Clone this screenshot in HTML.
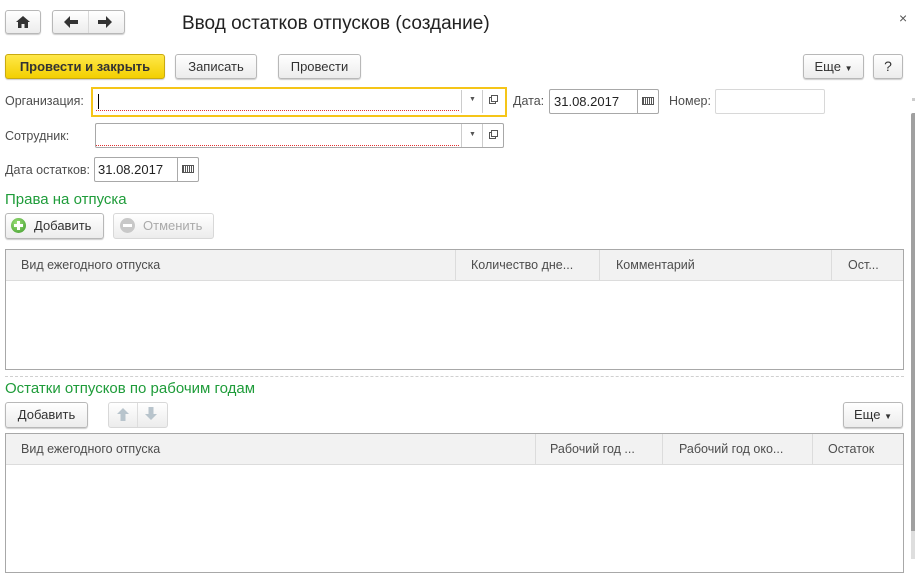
<!DOCTYPE html>
<html><head><meta charset="utf-8"><style>
*{box-sizing:border-box;margin:0;padding:0}
body{width:915px;height:570px;overflow:hidden;background:#fff;font-family:"Liberation Sans",sans-serif;font-size:12px;color:#333;position:relative}
.a{position:absolute}
.btn{position:absolute;border:1px solid #b8b8b8;border-radius:3px;background:linear-gradient(#fff,#ececec);box-shadow:0 1px 1px rgba(0,0,0,.2);text-align:center;color:#333;font-size:13px}
.fld{position:absolute;border:1px solid #a8a8a8;border-radius:2px;background:#fff}
.lbl{position:absolute;font-size:12.5px;color:#4d4d4d}
.green{position:absolute;color:#1f9c3a;font-size:15px}
.th{position:absolute;top:0;height:31px;line-height:31px;font-size:12.5px;color:#4d4d4d;border-right:1px solid #dcdcdc;padding-left:15px;white-space:nowrap}
.red{position:absolute;height:1px;background:repeating-linear-gradient(90deg,#e03030 0 1px,transparent 1px 2px)}
</style></head><body>
<div class="btn" style="left:5px;top:10px;width:36px;height:24px"><svg width="14" height="12" style="margin-top:5px" viewBox="0 0 14 12"><path d="M7 0 L14 6 L12 6 L12 12 L8.5 12 L8.5 8 L5.5 8 L5.5 12 L2 12 L2 6 L0 6Z" fill="#333"/></svg></div>
<div class="btn" style="left:52px;top:10px;width:73px;height:24px"></div>
<div class="a" style="left:88px;top:11px;width:1px;height:22px;background:#d8d8d8"></div>
<svg class="a" style="left:63px;top:15px" width="16" height="14" viewBox="0 0 16 14"><path d="M1 7 L7 1 L7 5 L15 5 L15 9 L7 9 L7 13Z" fill="#333"/></svg>
<svg class="a" style="left:97px;top:15px" width="16" height="14" viewBox="0 0 16 14"><path d="M15 7 L9 1 L9 5 L1 5 L1 9 L9 9 L9 13Z" fill="#333"/></svg>
<div class="a" style="left:182px;top:13px;font-size:19px;color:#222">Ввод остатков отпусков (создание)</div>
<div class="a" style="left:899px;top:10px;font-size:14px;color:#555">×</div>

<div class="btn" style="left:5px;top:54px;width:160px;height:25px;line-height:23px;background:linear-gradient(#ffe84a,#f3cf00);border-color:#c9aa10;font-weight:bold;color:#333">Провести и закрыть</div>
<div class="btn" style="left:175px;top:54px;width:82px;height:25px;line-height:23px">Записать</div>
<div class="btn" style="left:278px;top:54px;width:83px;height:25px;line-height:23px">Провести</div>
<div class="btn" style="left:803px;top:54px;width:61px;height:25px;line-height:23px">Еще <span style="font-size:8px">▼</span></div>
<div class="btn" style="left:873px;top:54px;width:30px;height:25px;line-height:23px;font-size:14px">?</div>

<div class="lbl" style="left:5px;top:94px">Организация:</div>
<div class="a" style="left:91px;top:87px;width:416px;height:30px;border:2px solid #f5c518"></div>
<div class="red" style="left:96px;top:110px;width:364px"></div>
<div class="a" style="left:98px;top:94px;width:1px;height:15px;background:#000"></div>
<div class="a" style="left:461px;top:90px;width:1px;height:23px;background:#ccc"></div>
<div class="a" style="left:482px;top:90px;width:1px;height:23px;background:#ccc"></div>
<div class="a" style="left:469px;top:96px;font-size:7px;color:#555">▼</div>
<div class="a" style="left:489px;top:97px;width:7px;height:7px;border:1px solid #555"></div>
<div class="a" style="left:491px;top:95px;width:7px;height:7px;border:1px solid #555;background:#fff"></div>

<div class="lbl" style="left:513px;top:94px">Дата:</div>
<div class="fld" style="left:549px;top:89px;width:110px;height:25px"></div>
<div class="a" style="left:554px;top:94px;font-size:13px;color:#222">31.08.2017</div>
<div class="a" style="left:637px;top:90px;width:1px;height:23px;background:#aaa"></div>
<div class="a" style="left:642px;top:97px;width:12px;height:8px;border:1px solid #555;background:repeating-linear-gradient(90deg,#555 0 1px,#fff 1px 2px)"></div>
<div class="lbl" style="left:669px;top:94px">Номер:</div>
<div class="fld" style="left:715px;top:89px;width:110px;height:25px;border-color:#d8d8d8"></div>

<div class="lbl" style="left:5px;top:129px">Сотрудник:</div>
<div class="fld" style="left:95px;top:123px;width:409px;height:25px"></div>
<div class="red" style="left:96px;top:145px;width:364px"></div>
<div class="a" style="left:461px;top:124px;width:1px;height:23px;background:#ccc"></div>
<div class="a" style="left:482px;top:124px;width:1px;height:23px;background:#ccc"></div>
<div class="a" style="left:469px;top:131px;font-size:7px;color:#555">▼</div>
<div class="a" style="left:489px;top:132px;width:7px;height:7px;border:1px solid #555"></div>
<div class="a" style="left:491px;top:130px;width:7px;height:7px;border:1px solid #555;background:#fff"></div>

<div class="lbl" style="left:5px;top:163px">Дата остатков:</div>
<div class="fld" style="left:94px;top:157px;width:105px;height:25px"></div>
<div class="a" style="left:98px;top:162px;font-size:13px;color:#222">31.08.2017</div>
<div class="a" style="left:177px;top:158px;width:1px;height:23px;background:#aaa"></div>
<div class="a" style="left:182px;top:165px;width:12px;height:8px;border:1px solid #555;background:repeating-linear-gradient(90deg,#555 0 1px,#fff 1px 2px)"></div>

<div class="green" style="left:5px;top:191px">Права на отпуска</div>
<div class="btn" style="left:5px;top:213px;width:99px;height:26px;line-height:24px;text-align:left;padding-left:28px">Добавить</div>
<div class="a" style="left:11px;top:218px;width:15px;height:15px;border-radius:50%;background:radial-gradient(circle at 40% 35%,#9de07a,#3d9a2a)"><div class="a" style="left:3px;top:6px;width:9px;height:3px;background:#fff"></div><div class="a" style="left:6px;top:3px;width:3px;height:9px;background:#fff"></div></div>
<div class="btn" style="left:113px;top:213px;width:101px;height:26px;line-height:24px;text-align:left;padding-left:29px;color:#aaa;box-shadow:none;border-color:#d8d8d8">Отменить</div>
<div class="a" style="left:120px;top:218px;width:15px;height:15px;border-radius:50%;background:#c8c8c8"><div class="a" style="left:3px;top:6px;width:9px;height:3px;background:#fff"></div></div>

<div class="a" style="left:5px;top:249px;width:899px;height:121px;border:1px solid #a8a8a8">
<div class="a" style="left:0;top:0;width:897px;height:31px;background:#f2f2f2;border-bottom:1px solid #dcdcdc"></div>
<div class="th" style="left:0;width:450px">Вид ежегодного отпуска</div>
<div class="th" style="left:450px;width:144px;padding-left:15px">Количество дне...</div>
<div class="th" style="left:594px;width:232px;padding-left:16px">Комментарий</div>
<div class="th" style="left:826px;width:71px;border:none;padding-left:16px">Ост...</div>
</div>
<div class="a" style="left:5px;top:376px;width:899px;border-top:1px dashed #d0d0d0"></div>

<div class="green" style="left:5px;top:380px">Остатки отпусков по рабочим годам</div>
<div class="btn" style="left:5px;top:402px;width:83px;height:26px;line-height:24px">Добавить</div>
<div class="btn" style="left:108px;top:402px;width:60px;height:26px;box-shadow:none;border-color:#d8d8d8"></div>
<div class="a" style="left:137px;top:403px;width:1px;height:24px;background:#ddd"></div>
<svg class="a" style="left:116px;top:407px" width="14" height="15" viewBox="0 0 14 15"><path d="M7 1 L13 7 L9.5 7 L9.5 14 L4.5 14 L4.5 7 L1 7Z" fill="#b8c4cc"/></svg>
<svg class="a" style="left:144px;top:406px" width="14" height="15" viewBox="0 0 14 15"><path d="M7 14 L13 8 L9.5 8 L9.5 1 L4.5 1 L4.5 8 L1 8Z" fill="#b8c4cc"/></svg>
<div class="btn" style="left:843px;top:402px;width:60px;height:26px;line-height:24px">Еще <span style="font-size:8px">▼</span></div>

<div class="a" style="left:5px;top:433px;width:899px;height:140px;border:1px solid #a8a8a8">
<div class="a" style="left:0;top:0;width:897px;height:31px;background:#f2f2f2;border-bottom:1px solid #dcdcdc"></div>
<div class="th" style="left:0;width:530px">Вид ежегодного отпуска</div>
<div class="th" style="left:530px;width:127px;padding-left:14px">Рабочий год ...</div>
<div class="th" style="left:657px;width:150px;padding-left:16px">Рабочий год око...</div>
<div class="th" style="left:807px;width:90px;border:none;padding-left:15px">Остаток</div>
</div>

<div class="a" style="left:912px;top:98px;width:3px;height:3px;background:#ccc"></div>
<div class="a" style="left:911px;top:113px;width:4px;height:418px;background:#a0a0a0;border-radius:2px 0 0 0"></div>
<div class="a" style="left:911px;top:531px;width:4px;height:28px;background:#dedede"></div>
</body></html>
